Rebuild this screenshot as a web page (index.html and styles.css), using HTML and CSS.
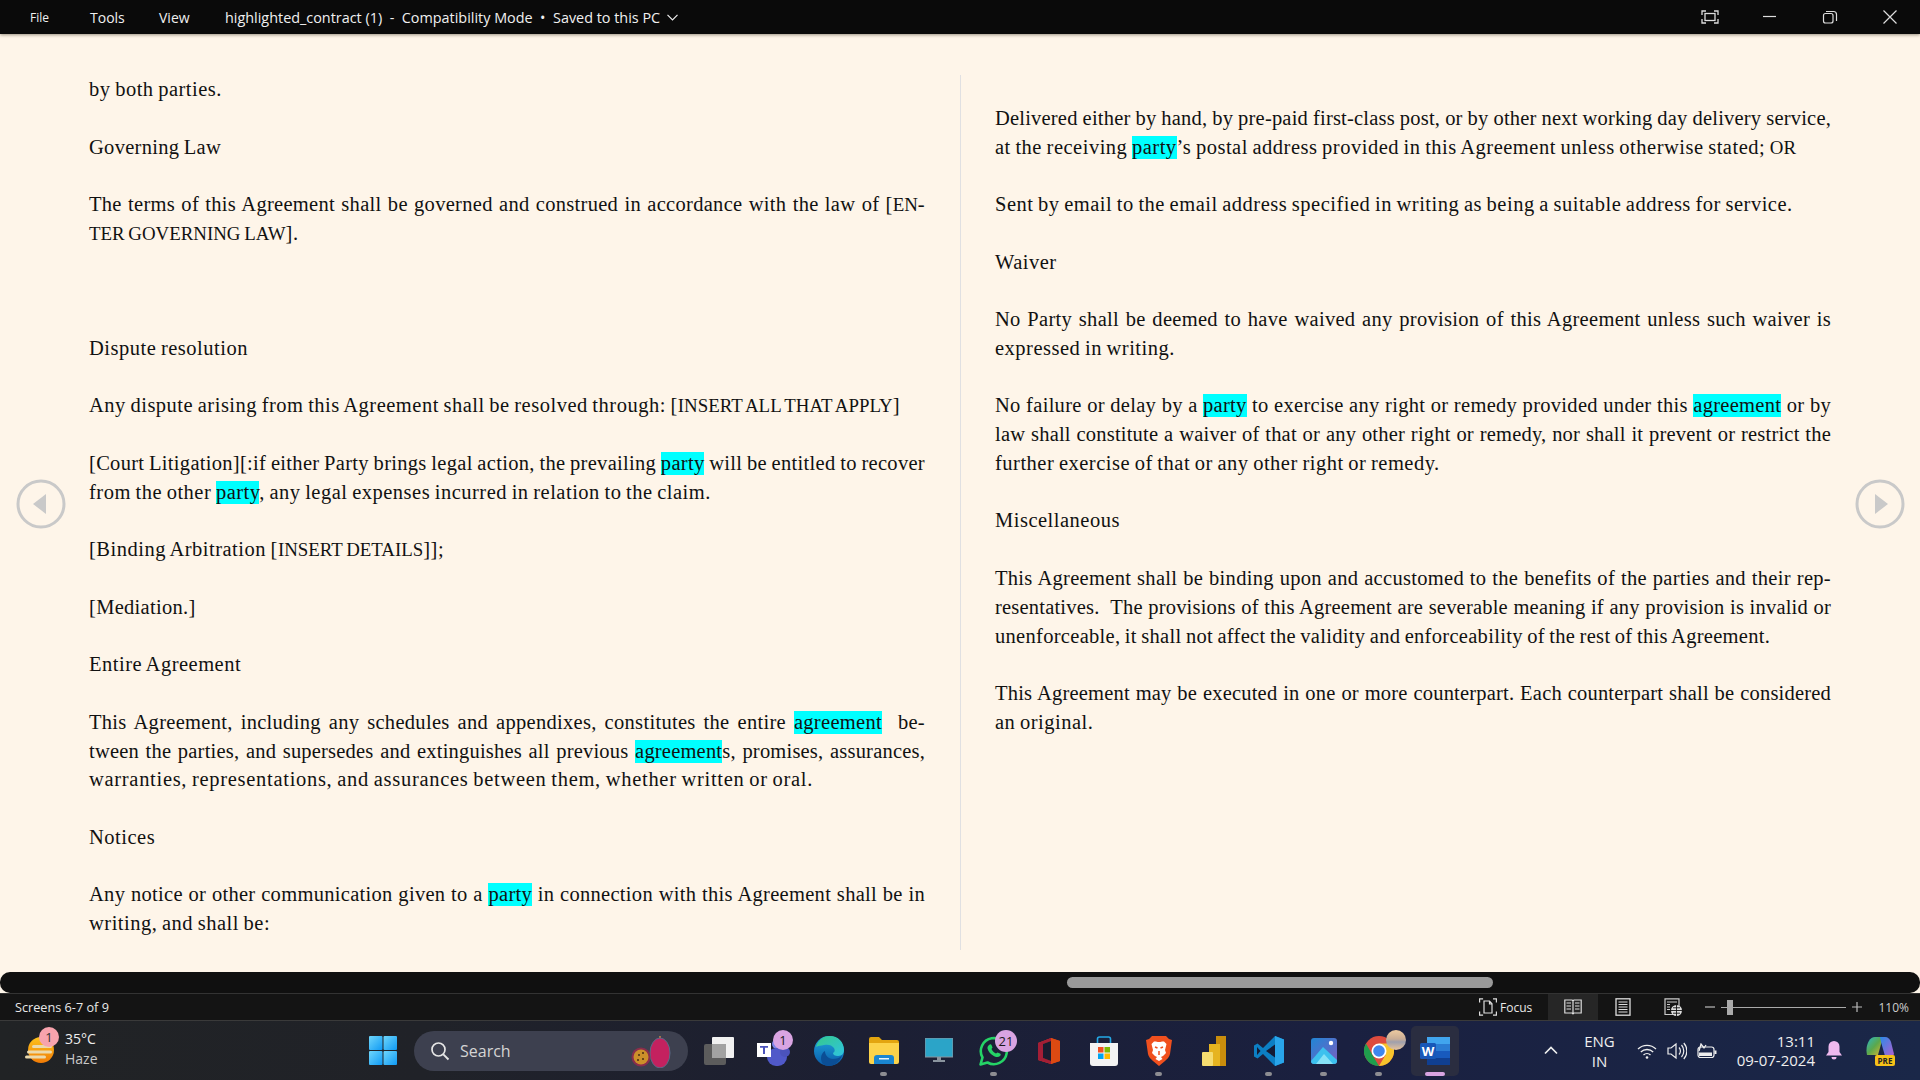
FILE: index.html
```html
<!DOCTYPE html>
<html lang="en">
<head>
    <meta charset="UTF-8">
    <title>highlighted_contract (1) - Compatibility Mode</title>
    <link rel="stylesheet" href="styles.css">
</head>
<body>
    <header class="titlebar">
        <nav class="menu">
            <span class="menu-file">File</span>
            <span class="menu-tools">Tools</span>
            <span class="menu-view">View</span>
        </nav>
        <div class="doc-title">highlighted_contract (1)&nbsp; - &nbsp;Compatibility Mode &nbsp;•&nbsp; Saved to this PC</div>
        <svg class="doc-chevron" width="11" height="7" viewBox="0 0 11 7"><path d="M.5.8 5.5 5.8 10.5.8" fill="none" stroke="#eee" stroke-width="1.2"/></svg>
        <div class="win-controls">
            <svg width="60" height="34" viewBox="0 0 60 34"><g fill="none" stroke="#ddd" stroke-width="1.3"><path d="M22 15v-4h4M34 11h4v4M38 19v4h-4M26 23h-4v-4"/><rect x="25" y="13.500" width="10" height="7"/></g></svg>
            <svg width="60" height="34" viewBox="0 0 60 34"><path d="M23 16.500h13" stroke="#ddd" stroke-width="1.2"/></svg>
            <svg width="60" height="34" viewBox="0 0 60 34"><g fill="none" stroke="#ddd" stroke-width="1.2"><rect x="23.500" y="13.500" width="9.500" height="9.500" rx="2"/><path d="M26 11.500h7.500a3 3 0 0 1 3 3V21"/></g></svg>
            <svg width="60" height="34" viewBox="0 0 60 34"><path d="M23.500 10.500l13 13M36.500 10.500l-13 13" stroke="#ddd" stroke-width="1.2"/></svg>
        </div>
    </header>

    <main class="reader">
        <section class="col col-left">
            <p><span class="ln">by both parties.</span></p>
            <p><span class="ln snug">Governing Law</span></p>
            <p>
                <span class="ln just">The terms of this Agreement shall be governed and construed in accordance with the law of [<span class="caps">EN</span>-</span>
                <span class="ln"><span class="caps">TER GOVERNING LAW</span>].</span>
            </p>
            <p class="blank"></p>
            <p><span class="ln">Dispute resolution</span></p>
            <p><span class="ln">Any dispute arising from this Agreement shall be resolved through: [<span class="caps">INSERT ALL THAT APPLY</span>]</span></p>
            <p>
                <span class="ln just">[Court Litigation][:if either Party brings legal action, the prevailing <mark>party</mark> will be entitled to recover</span>
                <span class="ln">from the other <mark>party</mark>, any legal expenses incurred in relation to the claim.</span>
            </p>
            <p><span class="ln">[Binding Arbitration [<span class="caps">INSERT DETAILS</span>]];</span></p>
            <p><span class="ln snug">[Mediation.]</span></p>
            <p><span class="ln">Entire Agreement</span></p>
            <p>
                <span class="ln just">This Agreement, including any schedules and appendixes, constitutes the entire <mark>agreement</mark> &nbsp;be-</span>
                <span class="ln just tight">tween the parties, and supersedes and extinguishes all previous <mark>agreement</mark><span class="tail">s</span>, promises, assurances,</span>
                <span class="ln loose">warranties, representations, and assurances between them, whether written or oral.</span>
            </p>
            <p><span class="ln">Notices</span></p>
            <p>
                <span class="ln just">Any notice or other communication given to a <mark>party</mark> in connection with this Agreement shall be in</span>
                <span class="ln">writing, and shall be:</span>
            </p>
        </section>
        <section class="col col-right">
            <p>
                <span class="ln just tight">Delivered either by hand, by pre-paid first-class post, or by other next working day delivery service,</span>
                <span class="ln">at the receiving <mark>party</mark>’s postal address provided in this Agreement unless otherwise stated; <span class="caps">OR</span></span>
            </p>
            <p><span class="ln">Sent by email to the email address specified in writing as being a suitable address for service.</span></p>
            <p><span class="ln">Waiver</span></p>
            <p>
                <span class="ln just">No Party shall be deemed to have waived any provision of this Agreement unless such waiver is</span>
                <span class="ln">expressed in writing.</span>
            </p>
            <p>
                <span class="ln just">No failure or delay by a <mark>party</mark> to exercise any right or remedy provided under this <mark>agreement</mark> or by</span>
                <span class="ln just tight">law shall constitute a waiver of that or any other right or remedy, nor shall it prevent or restrict the</span>
                <span class="ln">further exercise of that or any other right or remedy.</span>
            </p>
            <p><span class="ln">Miscellaneous</span></p>
            <p>
                <span class="ln just">This Agreement shall be binding upon and accustomed to the benefits of the parties and their rep-</span>
                <span class="ln just tight">resentatives.&nbsp; The provisions of this Agreement are severable meaning if any provision is invalid or</span>
                <span class="ln snug">unenforceable, it shall not affect the validity and enforceability of the rest of this Agreement.</span>
            </p>
            <p>
                <span class="ln just tight">This Agreement may be executed in one or more counterpart. Each counterpart shall be considered</span>
                <span class="ln">an original.</span>
            </p>
        </section>

        <svg class="page-arrow arrow-prev" width="50" height="50" viewBox="0 0 50 50"><circle cx="25" cy="25" r="23" fill="none" stroke="#c9c9c9" stroke-width="3"/><path d="M17 25 30 15v20z" fill="#c9c9c9"/></svg>
        <svg class="page-arrow arrow-next" width="50" height="50" viewBox="0 0 50 50"><circle cx="25" cy="25" r="23" fill="none" stroke="#c9c9c9" stroke-width="3"/><path d="M33 25 20 15v20z" fill="#c9c9c9"/></svg>
    </main>

    <div class="hscroll"><div class="hscroll-thumb"></div></div>

    <footer class="statusbar">
        <span class="screens">Screens 6-7 of 9</span>
        <div class="focus">
            <svg width="18" height="18" viewBox="0 0 18 18"><g fill="none" stroke="#ddd" stroke-width="1.2"><path d="M.6 4.500V.8h3.500M14 .8h3.400v3.700M17.400 13.500v3.700H14M4.100 17.200H.6v-3.700"/><path d="M5 3h5.500L13 5.800V15H5zM10.500 3v3H13"/></g></svg>
            <span>Focus</span>
        </div>
        <div class="view-btn view-active">
            <svg width="18" height="16" viewBox="0 0 18 16"><g fill="none" stroke="#ddd" stroke-width="1.2"><path d="M.8 1h7.400l.8 .8.8-.8h7.400v13H9.800l-.8.800-.8-.8H.8zM9 2v12"/><path d="M2.500 4h4.500M2.500 7h4.500M2.500 10h4.500M11 4h4.500M11 7h4.500M11 10h4.500" stroke-width="1"/></g></svg>
        </div>
        <div class="view-btn">
            <svg width="16" height="18" viewBox="0 0 16 18"><rect x="1" y=".8" width="14" height="16.400" fill="none" stroke="#ddd" stroke-width="1.3"/><path d="M3.500 4h9M3.500 6.500h9M3.500 9h9M3.500 11.500h9M3.500 14h9" stroke="#ddd"/></svg>
        </div>
        <div class="view-btn">
            <svg width="18" height="18" viewBox="0 0 18 18"><g fill="none" stroke="#ccc"><path d="M9 16.500H1V.8h14V8" stroke-width="1.200"/><path d="M3 4h10M3 6.500h3M3 9h3M3 11.500h3" /></g><circle cx="12.500" cy="12.500" r="5.500" fill="#ddd"/><path d="M7 12.500h11M12.500 7v11M9 9.800h7M9 15.200h7" stroke="#141414" stroke-width=".9"/></svg>
        </div>
        <div class="zoom">
            <svg width="10" height="2" viewBox="0 0 10 2"><path d="M0 1h10" stroke="#bbb" stroke-width="1.200"/></svg>
            <div class="zoom-track"><div class="zoom-thumb"></div></div>
            <svg width="10" height="10" viewBox="0 0 10 10"><path d="M0 5h10M5 0v10" stroke="#bbb" stroke-width="1.200"/></svg>
        </div>
        <span class="zoom-pct">110%</span>
    </footer>

    <div class="taskbar">
        <div class="weather">
            <svg class="weather-icon" width="32" height="28" viewBox="0 0 32 28">
                <defs><linearGradient id="sun" x1="0" y1="0" x2="0" y2="1"><stop offset="0" stop-color="#fdc31c"/><stop offset="1" stop-color="#f07b06"/></linearGradient></defs>
                <circle cx="17" cy="14" r="13" fill="url(#sun)"/>
                <g fill="#ebd9ac"><rect x="8" y="9" width="20" height="3" rx="1.500"/><rect x="3" y="14.500" width="25" height="3" rx="1.500"/><rect x="1" y="19.500" width="21" height="3" rx="1.500"/></g>
            </svg>
            <span class="weather-badge">1</span>
            <div class="weather-text"><span>35°C</span><span class="haze">Haze</span></div>
        </div>
        <div class="start">
            <svg width="28" height="29" viewBox="0 0 28 29">
                <defs><linearGradient id="win" x1="0" y1="0" x2="1" y2="1"><stop offset="0" stop-color="#6fd6fb"/><stop offset="1" stop-color="#0f9af5"/></linearGradient></defs>
                <g fill="url(#win)"><rect width="13.500" height="14" rx="1"/><rect x="14.500" width="13.500" height="14" rx="1"/><rect y="15" width="13.500" height="14" rx="1"/><rect x="14.500" y="15" width="13.500" height="14" rx="1"/></g>
            </svg>
        </div>
        <div class="search">
            <svg width="20" height="20" viewBox="0 0 20 20"><circle cx="8.500" cy="8.500" r="6.500" fill="none" stroke="#e6e6e6" stroke-width="1.700"/><path d="M13.300 13.300 18.500 18.500" stroke="#e6e6e6" stroke-width="1.900"/></svg>
            <span>Search</span>
            <svg class="search-fruit" width="40" height="34" viewBox="0 0 40 34">
                <path d="M29 2v5" stroke="#c08a4a" stroke-width="1.500"/>
                <ellipse cx="29" cy="19" rx="10" ry="15" fill="#c4215f" stroke="#5a6a88"/>
                <circle cx="10" cy="23" r="9.500" fill="#8a2d4c"/>
                <circle cx="10" cy="23" r="7.500" fill="#cc8f2a"/>
                <circle cx="8" cy="21" r="1" fill="#4a2c10"/><circle cx="12" cy="25" r="1" fill="#4a2c10"/><circle cx="12" cy="19" r="1" fill="#4a2c10"/><circle cx="7" cy="26" r="1" fill="#4a2c10"/>
            </svg>
        </div>
        <div class="apps">
            <div class="app">
                <svg width="30" height="28" viewBox="0 0 30 28"><rect y="7" width="22" height="21" rx="2" fill="#5c5c5c"/><rect x="8" width="22" height="21" rx="1" fill="#f1f1f1"/><rect x="8" y="7" width="14" height="14" fill="#a2a2a2"/></svg>
            </div>
            <div class="app">
                <svg width="34" height="30" viewBox="0 0 34 30"><circle cx="20" cy="8" r="5" fill="#7b83eb"/><rect x="10" y="12" width="20" height="18" rx="9" fill="#5059c9"/><circle cx="28" cy="16" r="5" fill="#4b53bc"/><rect y="7" width="14" height="14" fill="#fff"/><path d="M3 10h8v1.800H8V18H6v-6.200H3z" fill="#4b53bc"/></svg>
                <span class="app-badge">1</span>
            </div>
            <div class="app">
                <svg width="30" height="30" viewBox="0 0 30 30">
                    <defs>
                        <linearGradient id="edgeA" x1="0" y1="0" x2="1" y2="1"><stop offset="0" stop-color="#36c98a"/><stop offset="1" stop-color="#2fc4e0"/></linearGradient>
                        <linearGradient id="edgeB" x1="0" y1="0" x2="0" y2="1"><stop offset="0" stop-color="#1fa6dc"/><stop offset="1" stop-color="#0a5aa8"/></linearGradient>
                    </defs>
                    <circle cx="15" cy="15" r="15" fill="url(#edgeB)"/>
                    <path d="M2 11C4 3 11 0 16 0c8 0 14 6 14 14 0 3-2 6-6 6-3 0-5-1-5-3 2-1 2-3 1-5-2-3-6-4-10-3-3 .500-6 1-8 2z" fill="url(#edgeA)"/>
                    <path d="M11 15c0 4 3 8 8 8 3 0 7-1 9-4-2 7-8 11-13 11-5 0-8-3-8-8 0-3 2-6 4-7z" fill="#0b4e95"/>
                </svg>
            </div>
            <div class="app has-dot">
                <svg width="30" height="27" viewBox="0 0 30 27"><path d="M0 2a2 2 0 0 1 2-2h8l3 3h15a2 2 0 0 1 2 2v3H0z" fill="#e3a50f"/><path d="M0 6h30v19a2 2 0 0 1-2 2H2a2 2 0 0 1-2-2z" fill="#fcd34a"/><path d="M5 21a3 3 0 0 1 3-3h14a3 3 0 0 1 3 3v6H5z" fill="#1a86d0"/><rect x="10" y="21" width="10" height="1.500" fill="#e6f4fb"/></svg>
            </div>
            <div class="app">
                <svg width="28" height="26" viewBox="0 0 28 26"><rect width="28" height="19" fill="#2ba4c8"/><rect width="28" height="19" fill="none" stroke="#8a949e"/><path d="M12 19h4v3h-4z" fill="#8a949e"/><rect x="8" y="22" width="12" height="2" fill="#8a949e"/></svg>
            </div>
            <div class="app has-dot">
                <svg width="30" height="30" viewBox="0 0 30 30"><path d="M1.500 28.500 3.500 21.500A13 13 0 1 1 8.500 26.500z" fill="none" stroke="#25d366" stroke-width="2.600" stroke-linejoin="round"/><path d="M10 9c1-1 2-1 2.500 0l1 2.500-1 1.500c1 2 2.500 3.500 4.500 4.500l1.500-1 2.500 1c1 .500 1 1.500 0 2.500-1.500 1.500-4 1.500-7-.5-3-2-5-4.500-5.500-7-.2-1.500.5-2.500 1.500-3.500z" fill="#25d366"/></svg>
                <span class="app-badge badge-wide">21</span>
            </div>
            <div class="app">
                <svg width="22" height="26" viewBox="0 0 22 26">
                    <path d="M0 5 13 0l9 3v20l-9 3-13-4z" fill="#e33a1a"/>
                    <path d="M0 5 13 0v3L5 6v14l8 3v3L0 22z" fill="#a41e36"/>
                    <path d="M5 6l8-3v20l-8-3z" fill="#1a1c30"/>
                    <path d="M13 0l9 3v20l-9 3z" fill="#dc4a12"/>
                </svg>
            </div>
            <div class="app">
                <svg width="28" height="30" viewBox="0 0 28 30"><path d="M7.500 7V3a2 2 0 0 1 2-2h9a2 2 0 0 1 2 2v4" fill="none" stroke="#25a9e6" stroke-width="1.600"/><path d="M0 7h28v20a3 3 0 0 1-3 3H3a3 3 0 0 1-3-3z" fill="#f3f3f3"/><rect x="8" y="11" width="5.500" height="5.500" fill="#f25022"/><rect x="14.500" y="11" width="5.500" height="5.500" fill="#7fba00"/><rect x="8" y="17.500" width="5.500" height="5.500" fill="#00a4ef"/><rect x="14.500" y="17.500" width="5.500" height="5.500" fill="#ffb900"/></svg>
            </div>
            <div class="app has-dot">
                <svg width="26" height="30" viewBox="0 0 26 30"><path d="M6 0h14l3 3 3 1-2 14c-.5 3-3 5-5 7l-6 5-6-5c-2-2-4.500-4-5-7L0 4l3-1z" fill="#f0501e"/><path d="M13 6c-2 0-3-.7-5-.5L5.500 8 7 14l-1 3 3 3 2 1-1.500 2 3.500 2 3.500-2L15 21l2-1 3-3-1-3 1.500-6L18 5.500c-2-.2-3 .5-5 .5z" fill="#fff"/><path d="M9 11l2.500 1M17 11l-2.500 1M13 15v4" stroke="#f0501e" stroke-width="1.500"/></svg>
            </div>
            <div class="app">
                <svg width="24" height="30" viewBox="0 0 24 30"><rect x="14" width="10" height="30" fill="#c98d0c"/><rect x="7" y="8" width="11" height="22" fill="#e6b420"/><rect y="16" width="11" height="14" rx="1" fill="#f5dc70"/></svg>
            </div>
            <div class="app has-dot">
                <svg width="30" height="30" viewBox="0 0 30 30"><path d="M21 0 9 12 3.500 7.500 0 9.500V20.500l3.500 2L9 18l12 12 9-3.500V3.500z" fill="#0c7fc4"/><path d="M21 0l9 3.500v23L21 30z" fill="#29a5ea"/><path d="M21 8.500 12 15l9 6.500z" fill="#141b34"/><path d="M3 11l3.500 4L3 19z" fill="#141b34"/></svg>
            </div>
            <div class="app has-dot">
                <svg width="26" height="26" viewBox="0 0 26 26">
                    <defs><linearGradient id="pho" x1="0" y1="0" x2="1" y2="1"><stop offset="0" stop-color="#2086d6"/><stop offset="1" stop-color="#7b5ec0"/></linearGradient></defs>
                    <rect width="26" height="26" rx="3" fill="url(#pho)"/>
                    <circle cx="20" cy="5" r="2.200" fill="#fff"/>
                    <path d="M0 23 12 9l14 13v1a3 3 0 0 1-3 3H3a3 3 0 0 1-3-3z" fill="#3dc1ee"/>
                    <path d="M5 26 13 16l9 10z" fill="#86e2f7"/>
                </svg>
            </div>
            <div class="app has-dot">
                <svg width="30" height="30" viewBox="0 0 30 30"><circle cx="15" cy="15" r="15" fill="#dd4b3e"/><path d="M15 30A15 15 0 0 1 2 7.500L9 20z" fill="#1f9e4d"/><path d="M15 7.500h13A15 15 0 0 1 15 30l6.500-11z" fill="#f7c42c"/><circle cx="15" cy="15" r="7.500" fill="#fff"/><circle cx="15" cy="15" r="5.800" fill="#3f86ee"/></svg>
                <span class="chrome-avatar"></span>
            </div>
            <div class="app app-active">
                <svg width="30" height="28" viewBox="0 0 30 28"><rect x="7" width="23" height="7" fill="#41a5ee"/><rect x="7" y="7" width="23" height="7" fill="#2b7cd3"/><rect x="7" y="14" width="23" height="7" fill="#185abd"/><rect x="7" y="21" width="23" height="7" fill="#103f91"/><rect y="6" width="16" height="16" rx="1.500" fill="#1858b8"/><text class="word-w" x="8" y="18.500" text-anchor="middle">W</text></svg>
            </div>
        </div>
        <div class="tray">
            <svg class="tray-chevron" width="14" height="9" viewBox="0 0 14 9"><path d="M1 7.500 7 1.500l6 6" fill="none" stroke="#eee" stroke-width="1.700"/></svg>
            <div class="lang"><span>ENG</span><span>IN</span></div>
            <svg width="20" height="16" viewBox="0 0 20 16"><g fill="none" stroke="#eee" stroke-width="1.300"><path d="M1 6a13 13 0 0 1 18 0M3.800 9a9 9 0 0 1 12.400 0M6.500 12a5 5 0 0 1 7 0"/></g><circle cx="10" cy="14.500" r="1.300" fill="#eee"/></svg>
            <svg width="20" height="18" viewBox="0 0 20 18"><g fill="none" stroke="#eee" stroke-width="1.200"><path d="M1 6h3l5-4v14l-5-4H1z"/><path d="M12 5.500a5 5 0 0 1 0 7M14.500 3a9 9 0 0 1 0 12M16.800 1a12 12 0 0 1 0 16"/></g></svg>
            <svg width="20" height="16" viewBox="0 0 20 16"><g fill="none" stroke="#eee" stroke-width="1.200"><rect x="1" y="4" width="16" height="10.500" rx="2.500"/><path d="M18.500 7.500v3.500" stroke-width="2"/></g><path d="M2 8 4 1l3 4 2-3" fill="none" stroke="#eee" stroke-width="1.300"/><rect x="2" y="9.500" width="13" height="3.500" fill="#eee"/></svg>
            <div class="clock"><span>13:11</span><span>09-07-2024</span></div>
            <svg width="16" height="19" viewBox="0 0 16 19"><path d="M8 0a5.500 5.500 0 0 1 5.500 5.500V11l2.500 3.500H0L2.500 11V5.500A5.500 5.500 0 0 1 8 0z" fill="#efb9ef"/><path d="M5.500 16h5a2.500 2.500 0 0 1-5 0z" fill="#efb9ef"/></svg>
            <svg class="copilot" width="30" height="30" viewBox="0 0 30 30">
                <defs><linearGradient id="cop" x1="0" y1="0" x2="1" y2="1"><stop offset="0" stop-color="#2bb7c7"/><stop offset=".5" stop-color="#5ba84c"/><stop offset="1" stop-color="#e0b830"/></linearGradient><linearGradient id="cop2" x1="0" y1="0" x2="1" y2="1"><stop offset="0" stop-color="#2a8ae8"/><stop offset="1" stop-color="#b45fd0"/></linearGradient></defs>
                <path d="M9 1h8l-5 18H1C-1 10 3 1 9 1z" fill="url(#cop)"/>
                <path d="M14 1h5c3 0 5 2 6 5l3 12c-1 3-5 4-9 2L15 6z" fill="url(#cop2)"/>
                <rect x="9" y="19" width="20" height="11" rx="2" fill="#f6c118"/>
                <text class="copilot-pre" x="19" y="27.500" text-anchor="middle">PRE</text>
            </svg>
        </div>
    </div>
</body>
</html>
```

FILE: styles.css
```css
* {
    box-sizing: border-box;
}
html, body {
    margin: 0;
    height: 1080px;
    overflow: hidden;
}
body {
    display: flex;
    flex-direction: column;
    background: #fef5e9;
    font-family: "Open Sans", "Noto Sans", sans-serif;
}

/* title bar */
.titlebar {
    flex: none;
    height: 34px;
    background: #0a0a0a;
    color: #f0f0f0;
    display: flex;
    align-items: center;
    font-size: 14px;
    box-shadow: 0 1px 3px rgba(60, 50, 30, 0.5);
    position: relative;
    z-index: 2;
}
.menu {
    display: flex;
    align-items: center;
}
.menu-file {
    font-size: 12px;
    margin-left: 30px;
    width: 60px;
}
.menu-tools {
    width: 69px;
}
.menu-view {
    width: 66px;
}
.doc-title {
    white-space: pre;
    font-size: 14.4px;
}
.doc-chevron {
    margin-left: 7px;
}
.win-controls {
    margin-left: auto;
    display: flex;
}

/* reading area */
.reader {
    flex: 1;
    position: relative;
    display: grid;
    grid-template-columns: 961px 1fr;
    align-items: start;
    padding-top: 41px;
    font-family: "Liberation Serif", serif;
    font-size: 20.5px;
    letter-spacing: 0.5px;
    word-spacing: -1px;
    color: #111;
}
.col {
    height: 875px;
}
.col-left {
    padding: 0 35px 0 89px;
    border-right: 1px solid #e0e0e2;
}
.col-right {
    padding: 28.78px 89px 0 34px;
}
.col p {
    margin: 0 0 28.78px;
}
.col p.blank {
    height: 28.78px;
}
.ln {
    display: block;
    height: 28.78px;
    line-height: 28.78px;
    white-space: nowrap;
}
.ln.just {
    white-space: normal;
    text-align: justify;
    text-align-last: justify;
    letter-spacing: 0.3px;
    word-spacing: -1.5px;
}
.ln.tight {
    letter-spacing: 0.2px;
    word-spacing: -1.8px;
}
.ln.snug {
    letter-spacing: 0.3px;
}
.ln.loose {
    letter-spacing: 0.7px;
}
.caps {
    font-size: 0.92em;
    letter-spacing: 0;
}
mark {
    background: #00ffff;
    color: inherit;
    padding-bottom: 1px;
}
.page-arrow {
    position: absolute;
    top: 445px;
}
.arrow-prev {
    left: 16px;
}
.arrow-next {
    right: 15px;
}

/* bottom scrollbar */
.hscroll {
    flex: none;
    height: 21px;
    background: #101010;
    border-radius: 10px;
    display: flex;
    align-items: center;
    padding-left: 1067px;
}
.hscroll-thumb {
    width: 426px;
    height: 11px;
    border-radius: 6px;
    background: #9a9a9a;
}

/* status bar */
.statusbar {
    flex: none;
    height: 28px;
    background: #141414;
    border-top: 1px solid #333;
    border-bottom: 1px solid #3a3a3a;
    color: #e8e8e8;
    font-size: 12px;
    display: flex;
    align-items: center;
    padding-left: 15px;
}
.screens {
    width: 1464px;
    font-size: 12.7px;
}
.focus {
    display: flex;
    align-items: center;
    gap: 3px;
    width: 69px;
}
.view-btn {
    width: 50px;
    height: 100%;
    display: flex;
    align-items: center;
    justify-content: center;
}
.view-active {
    background: #262626;
}
.zoom {
    display: flex;
    align-items: center;
    margin-left: 7px;
}
.zoom-track {
    width: 125px;
    height: 1px;
    background: #aaa;
    margin: 0 6px 0 6px;
    position: relative;
}
.zoom-thumb {
    position: absolute;
    left: 6px;
    top: -7px;
    width: 6px;
    height: 15px;
    background: #aaa;
}
.zoom-pct {
    margin-left: auto;
    margin-right: 11px;
    color: #ccc;
}

/* windows taskbar */
.taskbar {
    flex: none;
    height: 59px;
    display: flex;
    align-items: center;
    color: #eee;
    background: linear-gradient(90deg, #212325 0%, #202228 22%, #1c1f33 45%, #1a2040 70%, #1a2748 100%);
}
.weather {
    width: 354px;
    height: 100%;
    position: relative;
    display: flex;
    align-items: center;
    padding-left: 65px;
}
.weather-icon {
    position: absolute;
    left: 24px;
    top: 15px;
}
.weather-badge {
    position: absolute;
    left: 39px;
    top: 6px;
    width: 20px;
    height: 20px;
    border-radius: 50%;
    background: #f7a3ad;
    color: #333;
    font-size: 13px;
    line-height: 20px;
    text-align: center;
}
.weather-text {
    display: flex;
    flex-direction: column;
    font-size: 14px;
    line-height: 20px;
    margin-top: -3px;
}
.haze {
    color: #c8c8c8;
}
.start {
    width: 60px;
    padding-right: 3px;
    display: flex;
    justify-content: center;
}
.search {
    width: 274px;
    height: 40px;
    border-radius: 20px;
    background: #3d404f;
    display: flex;
    align-items: center;
    padding-left: 16px;
    gap: 10px;
    color: #d4d4d4;
    font-size: 16px;
    position: relative;
}
.search-fruit {
    position: absolute;
    right: 17px;
    top: 3px;
}
.apps {
    display: flex;
    margin-left: 3px;
}
.app {
    width: 55px;
    height: 50px;
    display: flex;
    align-items: center;
    justify-content: center;
    position: relative;
}
.has-dot::after {
    content: "";
    position: absolute;
    left: 24px;
    bottom: 0;
    width: 7px;
    height: 4px;
    border-radius: 2px;
    background: #8d8d92;
}
.app-badge {
    position: absolute;
    left: 27px;
    top: 4px;
    width: 20px;
    height: 20px;
    border-radius: 50%;
    background: #d9a4e2;
    color: #1a1a1a;
    font-size: 13px;
    line-height: 20px;
    text-align: center;
}
.badge-wide {
    left: 29px;
    width: 22px;
    height: 22px;
    line-height: 22px;
}
.chrome-avatar {
    position: absolute;
    left: 35px;
    top: 4px;
    width: 20px;
    height: 20px;
    border-radius: 50%;
    background: linear-gradient(180deg, #eecba0 0%, #c9ad96 45%, #9fa0ad 60%, #e8c39a 100%);
}
.app-active {
    width: 48px;
    margin-left: 5px;
    background: #2a2d40;
    border-radius: 5px;
}
.app-active::after {
    content: "";
    position: absolute;
    left: 14px;
    bottom: 0;
    width: 20px;
    height: 4px;
    border-radius: 2px;
    background: #d9a4e2;
}
.word-w {
    font-family: "Open Sans", sans-serif;
    font-size: 13px;
    font-weight: 700;
    fill: #fff;
}
.tray {
    margin-left: auto;
    display: flex;
    align-items: center;
    font-size: 15px;
    padding-right: 24px;
}
.tray-chevron {
    margin-right: 26px;
}
.lang {
    display: flex;
    flex-direction: column;
    align-items: center;
    line-height: 20px;
    margin-right: 22px;
}
.tray svg + svg {
    margin-left: 10px;
}
.clock {
    display: flex;
    flex-direction: column;
    align-items: flex-end;
    line-height: 19px;
    margin: 0 11px 0 20px;
}
.tray .copilot {
    margin-left: 24px;
}
.copilot-pre {
    font-family: "Open Sans", sans-serif;
    font-size: 8px;
    font-weight: 700;
    fill: #222;
}
```
